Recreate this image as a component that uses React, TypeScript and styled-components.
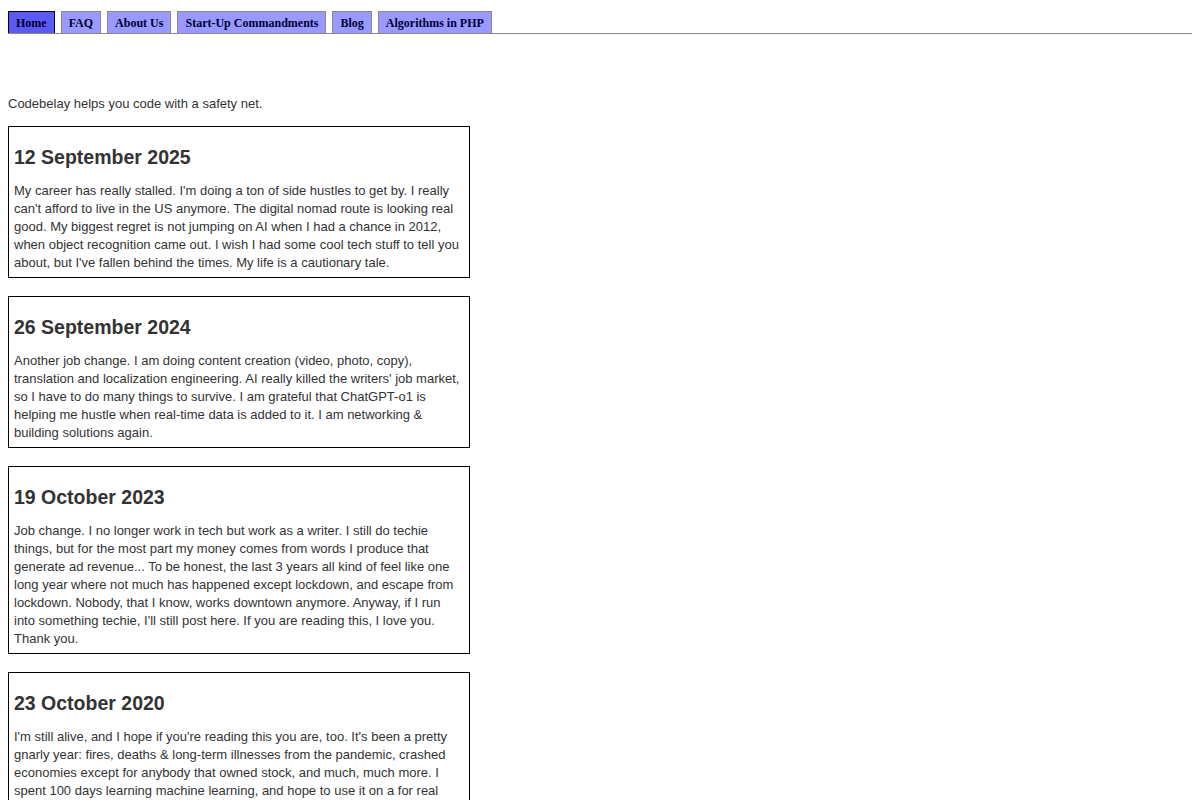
import styled, { createGlobalStyle } from "styled-components";

const GlobalStyle = createGlobalStyle`
  body {
    margin: 8px;
    background: #ffffff;
    font-family: "Liberation Sans", Arial, sans-serif;
    color: #333333;
  }
`;

const tabs = [
  "Home",
  "FAQ",
  "About Us",
  "Start-Up Commandments",
  "Blog",
  "Algorithms in PHP",
];

const posts = [
  {
    date: "12 September 2025",
    body: "My career has really stalled. I'm doing a ton of side hustles to get by. I really can't afford to live in the US anymore. The digital nomad route is looking real good. My biggest regret is not jumping on AI when I had a chance in 2012, when object recognition came out. I wish I had some cool tech stuff to tell you about, but I've fallen behind the times. My life is a cautionary tale.",
  },
  {
    date: "26 September 2024",
    body: "Another job change. I am doing content creation (video, photo, copy), translation and localization engineering. AI really killed the writers' job market, so I have to do many things to survive. I am grateful that ChatGPT-o1 is helping me hustle when real-time data is added to it. I am networking & building solutions again.",
  },
  {
    date: "19 October 2023",
    body: "Job change. I no longer work in tech but work as a writer. I still do techie things, but for the most part my money comes from words I produce that generate ad revenue... To be honest, the last 3 years all kind of feel like one long year where not much has happened except lockdown, and escape from lockdown. Nobody, that I know, works downtown anymore. Anyway, if I run into something techie, I'll still post here. If you are reading this, I love you. Thank you.",
  },
  {
    date: "23 October 2020",
    body: "I'm still alive, and I hope if you're reading this you are, too. It's been a pretty gnarly year: fires, deaths & long-term illnesses from the pandemic, crashed economies except for anybody that owned stock, and much, much more. I spent 100 days learning machine learning, and hope to use it on a for real project soon. Stay safe out there, wear a mask, and keep coding.",
  },
];

const App = (): JSX.Element => {
  return (
    <Page>
      <GlobalStyle />
      <TabBar>
        {tabs.map((label, i) => (
          <Tab key={label} href="#" $active={i === 0}>
            {label}
          </Tab>
        ))}
      </TabBar>
      <Tagline>Codebelay helps you code with a safety net.</Tagline>
      <Posts>
        {posts.map((post) => (
          <Post key={post.date}>
            <h2>{post.date}</h2>
            <p>{post.body}</p>
          </Post>
        ))}
      </Posts>
    </Page>
  );
};

const Page = styled.div`
  width: 100%;
`;

const TabBar = styled.nav`
  display: flex;
  flex-direction: row;
  align-items: flex-end;
  gap: 6px;
  padding-top: 3px;
  border-bottom: 1px solid #888888;
`;

const Tab = styled.a<{ $active: boolean }>`
  display: block;
  padding: 0 7px;
  height: 21px;
  line-height: 22px;
  font-family: "Liberation Serif", "Times New Roman", serif;
  font-size: 12px;
  font-weight: 700;
  color: #000033;
  text-decoration: none;
  background: ${(p) => (p.$active ? "#5a5af2" : "#9999ff")};
  border: 1px solid ${(p) => (p.$active ? "#000033" : "#888888")};
  border-bottom: none;
`;

const Tagline = styled.p`
  margin: 62px 0 0 0;
  font-size: 13px;
  line-height: 16px;
  color: #333333;
`;

const Posts = styled.div`
  display: flex;
  flex-direction: column;
  gap: 18px;
  margin-top: 14px;
`;

const Post = styled.section`
  box-sizing: border-box;
  width: 462px;
  border: 1px solid #000000;
  padding: 5px 5px 5px 5px;

  h2 {
    margin: 14px 0 13px 0;
    font-size: 19.5px;
    line-height: 23px;
    font-weight: 700;
    color: #333333;
  }

  p {
    margin: 0;
    font-size: 13px;
    line-height: 18px;
    color: #333333;
  }
`;

export default App;
